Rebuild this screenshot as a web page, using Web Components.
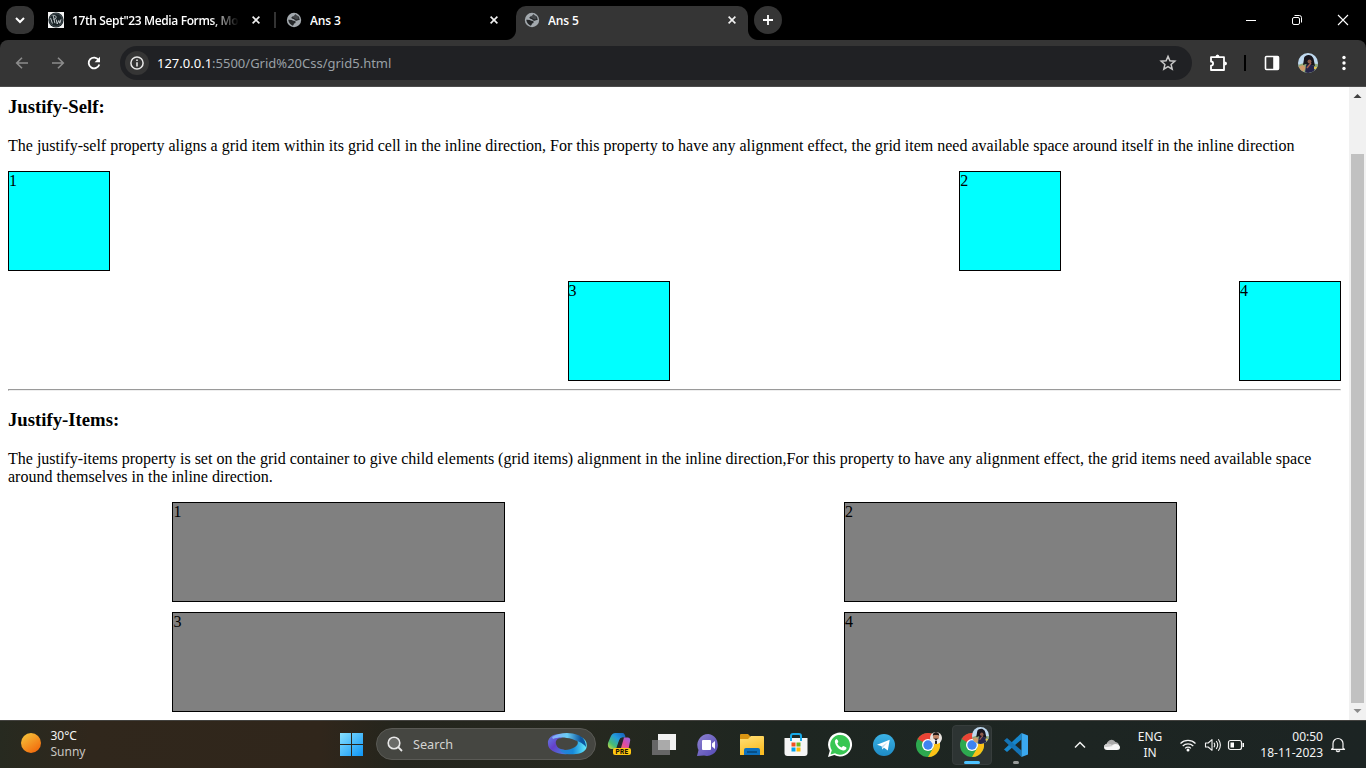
<!DOCTYPE html>
<html lang="en">
<head>
<meta charset="utf-8">
<title>Ans 5</title>
<style>
html,body{margin:0;height:768px;overflow:hidden;background:#000}
</style>
</head>
<body>
<desktop-screen></desktop-screen>
<script>
const ICONS = {
  caret: [16,16,'<path d="M4 6l4 4 4-4" fill="none" stroke="#fff" stroke-width="2"/>'],
  close: [16,16,'<path d="M4.6 4.6l6.8 6.8M11.4 4.6l-6.8 6.8" stroke="#f0f0f0" stroke-width="1.6"/>'],
  plus: [16,16,'<path d="M8 3v10M3 8h10" stroke="#fff" stroke-width="1.8"/>'],
  wp: [16,16,'<path fill="#f4f4f4" d="M0 0h16v16H0z"/><circle cx="8" cy="8" r="7.6" fill="#182226"/><circle cx="8" cy="8" r="6.4" fill="none" stroke="#59646a" stroke-width=".7"/><path d="M5.400 4.200l1.500 7M8.200 7.500l1 4.500 1.600-3.500 1 2.800 1.200-4M2.600 6l1.800 5.500" stroke="#c3cacd" stroke-width="1" fill="none"/><path d="M4.500 3.700c3-1 4.500 1 3 3l-2 .8" fill="none" stroke="#c3cacd" stroke-width="1"/>'],
  globe: [16,16,'<circle cx="8" cy="8" r="7.200" fill="#a3a9ae"/><path d="M9.300 2.300L13 4.700 13.700 8q-1.700-.2-2.500.5-.8.700-2.200-.3Q8.300 7 6.500 6.800q-1.200-.2-1.100-1.200Q6 4 7.700 4 8.500 3.600 9.300 2.300z" fill="#252729"/><path d="M2.200 7.800q3.400-.3 5.200 1 2.100-.2 2.300 1.200-.2 1.500-1.700 1.500-.1 1.500-1.200 2.200Q3 12.200 2.200 7.800z" fill="#252729"/><path d="M8.300 3.200Q5.500 4 6.700 5.500q2 .2 2.500 1.500 2.100.8 3.300-.2.700-2.300-1.300-3.800z" fill="#a3a9ae" opacity=".25"/>'],
  min: [16,16,'<path d="M3 8.500h10" stroke="#fff"/>'],
  restore: [16,16,'<rect x="3.5" y="5.5" width="7" height="7" rx="1.5" fill="none" stroke="#fff"/><path d="M5.5 3.5h4.800a2.200 2.200 0 0 1 2.200 2.200v4.800" fill="none" stroke="#fff"/>'],
  winclose: [16,16,'<path d="M3 3l10 10M13 3L3 13" stroke="#fff" stroke-width="1.1"/>'],
  back: [16,16,'<path d="M14 8H3M8 2.700L2.700 8 8 13.300" fill="none" stroke="#8c8c8c" stroke-width="1.600"/>'],
  fwd: [16,16,'<path d="M2 8h11M8 2.700L13.300 8 8 13.300" fill="none" stroke="#8c8c8c" stroke-width="1.600"/>'],
  reload: [16,16,'<path d="M12.700 5.100A5.400 5.400 0 1 0 13.300 9.400" fill="none" stroke="#fff" stroke-width="1.800"/><path d="M14 1.800v5.400H8.600z" fill="#fff"/>'],
  info: [16,16,'<circle cx="8" cy="8" r="6.100" fill="none" stroke="#e8e8e8" stroke-width="1.500"/><path d="M8 7.200v4.200M8 4.400v1.600" stroke="#e8e8e8" stroke-width="1.600"/>'],
  star: [18,18,'<path d="M9 2.400l1.900 4.400 4.900.4-3.700 3.200 1.100 4.800L9 12.700l-4.200 2.500 1.100-4.800-3.700-3.200 4.900-.4z" fill="none" stroke="#c9c9c9" stroke-width="1.500"/>'],
  puzzle: [20,20,'<path d="M3 4.200H16V17H3v-4.300a2.100 2.100 0 0 0 0-4.200z" fill="none" stroke="#fff" stroke-width="1.800" stroke-linejoin="round"/><path d="M7.500 4a2 2.500 0 0 1 4 0zM16.500 8.500a2.500 2 0 0 1 0 4z" fill="#fff"/>'],
  panel: [16,16,'<rect x="1.500" y="1.500" width="13" height="13" rx="1" fill="none" stroke="#fff" stroke-width="1.600"/><path d="M9.200 1.500H14.500v13H9.200z" fill="#fff"/>'],
  photo: [20,20,'<defs><clipPath id="c"><circle cx="10" cy="10" r="10"/></clipPath></defs><g clip-path="url(#c)"><path fill="#bfd9ef" d="M0 0h20v20H0z"/><path fill="#8fa878" d="M0 12l6-2 14 1v9H0z"/><path fill="#d09a6a" d="M0 14l5-2 3 3-4 5H0z"/><path fill="#17151d" d="M6 6c0-3 2.500-4 5-4s5 3 5 6l1 5-4-1-3 1-2-2-3 1z"/><circle cx="11.500" cy="8.500" r="2" fill="#8c5b4b"/><path fill="#26244a" d="M8 12l4-1 4 2 1 7H7z"/><path d="M9 15l4-5" stroke="#a4604f" stroke-width="1.400"/><path fill="#e7c44c" d="M16 14h3v2h-3z"/></g>'],
  dots: [16,20,'<circle cx="8" cy="4.500" r="1.700" fill="#fff"/><circle cx="8" cy="10" r="1.700" fill="#fff"/><circle cx="8" cy="15.500" r="1.700" fill="#fff"/>'],
  sun: [20,20,'<defs><linearGradient id="g" x1=".1" y1="0" x2=".8" y2="1"><stop stop-color="#f5c63c"/><stop offset="1" stop-color="#f2660a"/></linearGradient></defs><circle cx="10" cy="10" r="10" fill="url(#g)"/>'],
  start: [24,24,'<defs><linearGradient id="g" gradientUnits="userSpaceOnUse" x1="0" y1="0" x2="24" y2="24"><stop stop-color="#8be2ff"/><stop offset="1" stop-color="#0a93f5"/></linearGradient></defs><path fill="url(#g)" d="M1 0h11v11H1zM13 0h11v11H13zM1 12h11v11H1zM13 12h11v11H13z"/>'],
  search: [16,16,'<circle cx="7" cy="7" r="5.800" fill="#6a6b68" stroke="#e9e9e9" stroke-width="1.600"/><path d="M11.200 11.200l3.800 3.800" stroke="#e9e9e9" stroke-width="1.800"/>'],
  loop: [40,24,'<defs><linearGradient id="a"><stop stop-color="#87a9fa"/><stop offset=".45" stop-color="#69cdf5"/><stop offset=".85" stop-color="#0b559f"/></linearGradient><linearGradient id="b" x1="0" y1="0" x2="1" y2="1"><stop stop-color="#6286e8"/><stop offset=".45" stop-color="#6540c8"/><stop offset="1" stop-color="#3e8ae0"/></linearGradient><linearGradient id="d"><stop stop-color="#2b7fd6"/><stop offset=".5" stop-color="#1689d8"/><stop offset="1" stop-color="#66eeff"/></linearGradient></defs><path fill="url(#b)" d="M1 12C0 6 6 2 12 2l3 4C10 6 8 9 9 12c1 4 4 5 9 6l4 4C9 23 1 18 1 12z"/><path fill="url(#d)" d="M12 17c6 2 11 1 16-2 3-2 4-5 1-8l5-2c5 2 7 7 5 12-3 5-12 6-20 5-4-1-6-3-7-5z"/><path fill="url(#a)" d="M5 5c7-5 19-5 26-2 5 2 8 6 8 12-4-5-9-6-14-8-7-2-14-2-19 0z"/>'],
  copilot: [26,26,'<defs><linearGradient id="a" x1="0" y1="1" x2="1" y2="0"><stop stop-color="#d8dc3d"/><stop offset=".28" stop-color="#48bb75"/><stop offset=".6" stop-color="#239bdc"/><stop offset="1" stop-color="#1659b9"/></linearGradient><linearGradient id="b" x1="0" y1="1" x2="1" y2="0"><stop stop-color="#f07850"/><stop offset=".5" stop-color="#dd4aa3"/><stop offset="1" stop-color="#9367e8"/></linearGradient></defs><path d="M1 11L3.500 5Q5 1 8.500 1H16q2 .5 2.500 4.500H15q-2 0-3 3L9 17H4q-4-1-3-6z" fill="url(#a)"/><path d="M11 17l3-9q1-2.500 3-2.500h4q3 .5 2 4L21.500 17z" fill="url(#b)"/><path d="M12 10q1-4.500 5-4.500L14 16h-4z" fill="#23262b"/><rect x="6" y="16" width="18" height="7" rx="2" fill="#ffc711"/>'],
  taskview: [24,24,'<path d="M6 1h18v16H6z" fill="#f1f1f1"/><path d="M0 7h18v15H0z" fill="#666"/><path d="M6 7h12v10H6z" fill="#aaa"/>'],
  chat: [24,24,'<defs><linearGradient id="g" x2="1" y2="1"><stop stop-color="#8e83cf"/><stop offset="1" stop-color="#5449b6"/></linearGradient></defs><path d="M12.500 1A11 11 0 1 1 8 22.500L1 23l1.500-6A11 11 0 0 1 12.500 1z" fill="url(#g)"/><rect x="6" y="7" width="9" height="10" rx="1" fill="#fff"/><path d="M16 10.500l3-2.500v8l-3-2.500z" fill="#fff"/>'],
  folder: [24,24,'<defs><linearGradient id="g" x2=".4" y2="1"><stop stop-color="#ffe179"/><stop offset="1" stop-color="#fbbd25"/></linearGradient></defs><path d="M0 2q0-1 1-1h7l3 3h12q1 0 1 1v5H0z" fill="#d99513"/><path d="M0 6h8l3-3h12q1 0 1 1v18H0z" fill="url(#g)"/><path d="M4 22v-5q0-2 2-2h12q2 0 2 2v5z" fill="#0d70bd"/><path d="M7 18h10v2H7z" fill="#074f87"/>'],
  store: [24,24,'<path d="M7 6V3q0-2 2-2h6q2 0 2 2v3" fill="none" stroke="#18a9e7" stroke-width="2"/><path d="M.5 5h23v15q0 3-3 3h-17q-3 0-3-3z" fill="#f5f5f5"/><path d="M7 5v3M17 5v3" stroke="#18a9e7" stroke-width="2"/><path fill="#f05022" d="M7.500 9.500h4v4h-4z"/><path fill="#6fb51e" d="M12.500 9.500h4v4h-4z"/><path fill="#00a1ed" d="M7.500 14.500h4v4h-4z"/><path fill="#ffb900" d="M12.500 14.500h4v4h-4z"/>'],
  whatsapp: [26,26,'<path d="M1 25l1.800-6.300A12 12 0 1 1 7.300 23z" fill="#fff"/><path d="M3.500 22.500l1.300-4.300A9.900 9.900 0 1 1 8 21.300z" fill="#38c653"/><path d="M9.500 7c-1 .4-2 1.500-1.500 3.400 1 4 4 7.200 8 8 2 .2 3.300-1 3.500-2.500.1-.6-3-2-3.500-1.900l-1.400 1.500c-2-.7-3.500-2.200-4.300-4l1-1.500c.2-.5-1-3-1.800-3z" fill="#fff"/>'],
  telegram: [22,22,'<defs><linearGradient id="g" x2="0" y2="1"><stop stop-color="#3bb2e5"/><stop offset="1" stop-color="#1e8bc5"/></linearGradient></defs><circle cx="11" cy="11" r="11" fill="url(#g)"/><path d="M4 10.800L16.700 5.800 14.800 16.500 11 13.700 9.200 15.500 8.700 12.300z" fill="#fff"/><path d="M8.700 12.300l6-4.300-4.300 4.900-.8 2.400z" fill="#bfdff2"/>'],
  chrome: [24,24,'<circle cx="12" cy="12" r="12" fill="#2da94f"/><path d="M12 12L1.600 6A12 12 0 0 1 22.400 6z" fill="#ea4335"/><path d="M22.400 6A12 12 0 0 1 12 24l5.200-9V6z" fill="#fbc116"/><path d="M12 6h10.400L17 12z" fill="#ea4335"/><circle cx="12" cy="12" r="6" fill="#fff"/><circle cx="12" cy="12" r="4.700" fill="#3f83f1"/>'],
  man: [12,12,'<defs><clipPath id="c"><circle cx="6" cy="6" r="6"/></clipPath></defs><g clip-path="url(#c)"><path fill="#e9e4df" d="M0 0h12v12H0z"/><circle cx="6" cy="5" r="3" fill="#bf8465"/><path d="M2.800 4q0-4 3.200-4t3.200 4L8 3H4z" fill="#211917"/><path d="M4 7h4l2.500 2v3h-9V9z" fill="#eee"/><path d="M4 6.500h4L6 9zM5 9h2v3H5z" fill="#29222b"/></g>'],
  vscode: [24,24,'<path d="M17.500 0v6.500L3 19 0 16.500z" fill="#1686cb"/><path d="M17.500 24v-6.500L3 5 0 7.500z" fill="#1474b6"/><path d="M17.500 0L24 2.500v19L17.500 24z" fill="#3aa8ef"/>'],
  up: [16,16,'<path d="M3 10.500l5-5 5 5" fill="none" stroke="#f2f2f2" stroke-width="1.500"/>'],
  cloud: [18,16,'<path d="M5 10A3.500 3.500 0 0 1 5 4.500 4.500 4.500 0 0 1 12.500 5 4 4 0 0 1 16 9z" fill="#aaa"/><path d="M1 9q2-3 5-2l3 1 3-1q5 0 5 3.500Q17 13 14 13H4Q1 13 1 10z" fill="#f6f6f6"/><path d="M3 7q2-1 4 0l3 2-6 1H1q0-2 2-3z" fill="#ccc"/>'],
  wifi: [18,16,'<path d="M1.500 6.500a10.600 10.600 0 0 1 15 0M3.700 9a7.500 7.500 0 0 1 10.600 0M6.100 11.300a4.100 4.100 0 0 1 5.800 0" fill="none" stroke="#f4f4f4" stroke-width="1.200"/><circle cx="9" cy="13" r="1.500" fill="#fff"/>'],
  sound: [18,16,'<path d="M1.500 6h2.700L8 2.700v10.600L4.200 10H1.500z" fill="none" stroke="#f4f4f4" stroke-width="1.100" stroke-linejoin="round"/><path d="M10 5.800q1.500 2.200 0 4.400M12.200 4q3 4 0 8M14.300 2.200q4.200 5.800 0 11.600" fill="none" stroke="#f4f4f4" stroke-width="1.100"/>'],
  battery: [18,16,'<rect x="1.500" y="3.500" width="13" height="9" rx="2" fill="none" stroke="#f4f4f4" stroke-width="1.200"/><path d="M3.500 5.500h3.500v5H3.500zM15.500 6h1.500v4h-1.500z" fill="#fff"/>'],
  bell: [16,16,'<path d="M3 11.300V6.500a5 5 0 0 1 10 0v4.800l1.500 1H1.500zM6 13.500q2 2 4 0" fill="none" stroke="#f4f4f4" stroke-width="1.200" stroke-linejoin="round"/>']
};

function define(name, css, html) {
  const t = document.createElement('template');
  t.innerHTML = `<style>:host{display:block;box-sizing:border-box}*{box-sizing:border-box}${css}</style>${html}`;
  customElements.define(name, class extends HTMLElement {
    constructor() { super(); this.attachShadow({mode:'open'}).append(t.content.cloneNode(true)); }
  });
}

customElements.define('ui-icon', class extends HTMLElement {
  constructor() { super(); this.attachShadow({mode:'open'}); }
  connectedCallback() {
    const [w, h, body] = ICONS[this.getAttribute('name')];
    this.shadowRoot.innerHTML = `<style>:host{display:block;flex:none;width:${w}px;height:${h}px}svg{display:block}</style><svg width="${w}" height="${h}" viewBox="0 0 ${w} ${h}">${body}</svg>`;
  }
});

define('browser-tab', `
:host{height:34px;display:flex;align-items:center;padding:0 8px 6px;position:relative;color:#fff;font:600 12px/16px "Open Sans",sans-serif}
:host([active]){background:#353535;border-radius:10px 10px 0 0}
:host([active])::before,:host([active])::after{content:"";position:absolute;bottom:0;width:10px;height:10px}
:host([active])::before{left:-10px;background:radial-gradient(circle at 0 0,transparent 9.5px,#353535 10.5px)}
:host([active])::after{right:-10px;background:radial-gradient(circle at 100% 0,transparent 9.5px,#353535 10.5px)}
.t{flex:1;margin:0 9px 0 8px;overflow:hidden;white-space:nowrap;padding-top:1px;letter-spacing:var(--track,-.15px)}
:host([long]) .t{-webkit-mask:linear-gradient(90deg,#000 calc(100% - 28px),transparent)}
`, `<slot name="icon"></slot><span class="t"><slot></slot></span><ui-icon name="close"></ui-icon>`);

define('tab-strip', `
:host{height:40px;background:#000;display:flex;padding-top:6px;font-family:"Open Sans",sans-serif}
.menu,.new{width:28px;height:28px;background:#353535;display:grid;place-items:center}
.menu{border-radius:10px;margin:0 6px}.new{border-radius:50%;margin-left:6px}
.a,.c{width:232px}.a{margin-right:0}
.sep{width:2px;height:16px;margin:6px 2px 0 2px;background:#333}
.win{margin-left:auto;display:flex}.win ui-icon{margin:6px 15px 0}
`, `<div class="menu"><ui-icon name="caret"></ui-icon></div>
<browser-tab class="a" long style="--track:-.38px"><ui-icon slot="icon" name="wp"></ui-icon>17th Sept"23 Media Forms, Mobile</browser-tab><i class="sep"></i>
<browser-tab class="c"><ui-icon slot="icon" name="globe"></ui-icon>Ans 3</browser-tab><span style="width:6px"></span>
<browser-tab class="c" active><ui-icon slot="icon" name="globe"></ui-icon>Ans 5</browser-tab>
<div class="new"><ui-icon name="plus"></ui-icon></div><div class="win"><ui-icon name="min"></ui-icon><ui-icon name="restore"></ui-icon><ui-icon name="winclose"></ui-icon></div>`);

define('tool-bar', `
:host{height:47px;background:#000}
.bar{height:47px;background:#353535;border-bottom:1px solid #4c4c4c;border-radius:8px 8px 0 0;display:flex;align-items:center;padding-left:14px}
.bar>ui-icon{margin-right:20px}
.omni{flex:none;width:1072px;height:34px;border-radius:17px;background:#202124;margin-left:-2px;padding:0 15px 0 5px;display:flex;align-items:center;color:#9aa0a6;font:13px/18px "Noto Sans",sans-serif}
.info{width:24px;height:24px;border-radius:50%;background:#353535;display:grid;place-items:center;margin-right:8px}
.url{flex:1}b{font-weight:400;color:#fff}
.ext{display:grid;grid-template-columns:52px 2px 52px 20px 48px;justify-items:center;align-items:center}
.ext i{width:2px;height:16px;background:#000}
.ext ui-icon:last-child{margin-left:4px}
`, `<div class="bar"><ui-icon name="back"></ui-icon><ui-icon name="fwd"></ui-icon><ui-icon name="reload"></ui-icon>
<div class="omni"><span class="info"><ui-icon name="info"></ui-icon></span><span class="url"><b>127.0.0.1</b>:5500/Grid%20Css/grid5.html</span><ui-icon name="star"></ui-icon></div>
<div class="ext"><ui-icon name="puzzle"></ui-icon><i></i><ui-icon name="panel"></ui-icon><ui-icon name="photo"></ui-icon><ui-icon name="dots"></ui-icon></div></div>`);

define('grid-item', `:host{border:1px solid #000;height:100px}`, `<slot></slot>`);

define('justify-page', `
:host{height:633px;width:1349px;background:#fff;color:#000;padding:9px 8px 0;overflow:hidden;font:16px/18px "Liberation Serif",serif}
h3{font-size:18.720px;line-height:21px;margin:0 0 20.300px}p{margin:0 0 16px}
.g{display:grid;grid-template-columns:1fr 1fr;gap:10px}
.self grid-item{width:102px;background:#0ff}
.items{justify-items:center}.items grid-item{width:calc(50% + 2px);background:#808080}
hr{border:1px solid;border-color:#9a9a9a #eee #eee #9a9a9a;margin:8px 0 17.700px}
`, `<h3>Justify-Self:</h3>
<p>The justify-self property aligns a grid item within its grid cell in the inline direction, For this property to have any alignment effect, the grid item need available space around itself in the inline direction</p>
<div class="g self"><grid-item>1</grid-item><grid-item style="justify-self:center">2</grid-item><grid-item style="justify-self:end">3</grid-item><grid-item style="justify-self:end">4</grid-item></div>
<hr><h3>Justify-Items:</h3>
<p>The justify-items property is set on the grid container to give child elements (grid items) alignment in the inline direction,For this property to have any alignment effect, the grid items need available space around themselves in the inline direction.</p>
<div class="g items"><grid-item>1</grid-item><grid-item>2</grid-item><grid-item>3</grid-item><grid-item>4</grid-item></div>`);

define('scroll-bar', `
:host{width:17px;height:633px;background:#f1f1f1;display:flex;flex-direction:column;align-items:center}
svg{display:block;flex:none}.thumb{width:13px;height:549px;margin-top:50px;background:#c1c1c1}
`, `<svg width="17" height="17"><path d="M4.500 11l4-4 4 4z" fill="#404040"/></svg><div class="thumb"></div><svg width="17" height="17"><path d="M4.500 6l4 4 4-4z" fill="#8b8b8b"/></svg>`);

define('task-bar', `
:host{height:48px;border-top:1px solid #43423f;background:linear-gradient(90deg,#272a20 0,#30271c 90px,#30261b 320px,#24251d 400px,#26281f 580px,#1e2621 780px,#1c2423 1366px);display:flex;color:#f4f4f4;font:12px/16px "Noto Sans",sans-serif}
.w{width:329px;display:flex;padding:7px 0 0 21px;gap:9.500px}.w ui-icon{margin-top:5px}.w small{display:block;font-size:12px;color:#c9c6c2}
.cell{width:44px;display:grid;place-items:center;position:relative}
.search{width:220px;height:32px;margin:7px 2px 0 3px;border:1px solid #5a5a55;border-radius:16px;background:#454641;display:flex;align-items:center;padding:0 8px 0 10px;color:#d4d4d2;font-size:12.700px}
.search span{flex:1;margin-left:10px}
.tile{width:40px;height:40px;border-radius:4px;background:#2d3433;border:1px solid #373d3c;display:grid;place-items:center}
.tag{position:absolute;left:12px;top:27px;width:24px;text-align:center;font:800 6.500px/8px Roboto,sans-serif;color:#171100;letter-spacing:.3px}
.badge{position:absolute;left:24px;top:11px}.big{left:22px;top:6px;transform:scale(.85);transform-origin:0 0}
.run{position:absolute;left:14px;bottom:4px;width:16px;height:3px;border-radius:2px;background:#4cc2ff}.idle{left:19px;width:6px;background:#969a99}
.tray{margin-left:25px;display:grid;grid-template-columns:33px 32px 44px 32px 17px 30px 72px 30px;place-items:center}
.lang{text-align:center;padding-top:1px}.clock{text-align:right;justify-self:end;white-space:nowrap}
`, `<div class="w"><ui-icon name="sun"></ui-icon><span>30°C<small>Sunny</small></span></div>
<div class="cell"><ui-icon name="start"></ui-icon></div>
<div class="search"><ui-icon name="search"></ui-icon><span>Search</span><ui-icon name="loop"></ui-icon></div>
<div class="cell"><ui-icon name="copilot"></ui-icon><span class="tag">PRE</span></div>
<div class="cell"><ui-icon name="taskview"></ui-icon></div><div class="cell"><ui-icon name="chat"></ui-icon></div><div class="cell"><ui-icon name="folder"></ui-icon></div><div class="cell"><ui-icon name="store"></ui-icon></div><div class="cell"><ui-icon name="whatsapp"></ui-icon></div><div class="cell"><ui-icon name="telegram"></ui-icon></div>
<div class="cell"><ui-icon name="chrome"></ui-icon><ui-icon class="badge" name="man"></ui-icon></div>
<div class="cell"><div class="tile"><ui-icon name="chrome"></ui-icon></div><ui-icon class="badge big" name="photo"></ui-icon><i class="run"></i></div>
<div class="cell"><ui-icon name="vscode"></ui-icon><i class="run idle"></i></div>
<div class="tray"><ui-icon name="up"></ui-icon><ui-icon name="cloud"></ui-icon><span class="lang">ENG<br>IN</span><ui-icon name="wifi"></ui-icon><ui-icon name="sound"></ui-icon><ui-icon name="battery"></ui-icon><span class="clock">00:50<br>18-11-2023</span><ui-icon name="bell"></ui-icon></div>`);

define('desktop-screen', `:host{width:1366px;height:768px;overflow:hidden}.view{display:flex}`,
`<tab-strip></tab-strip><tool-bar></tool-bar><div class="view"><justify-page></justify-page><scroll-bar></scroll-bar></div><task-bar></task-bar>`);
</script>
</body>
</html>
